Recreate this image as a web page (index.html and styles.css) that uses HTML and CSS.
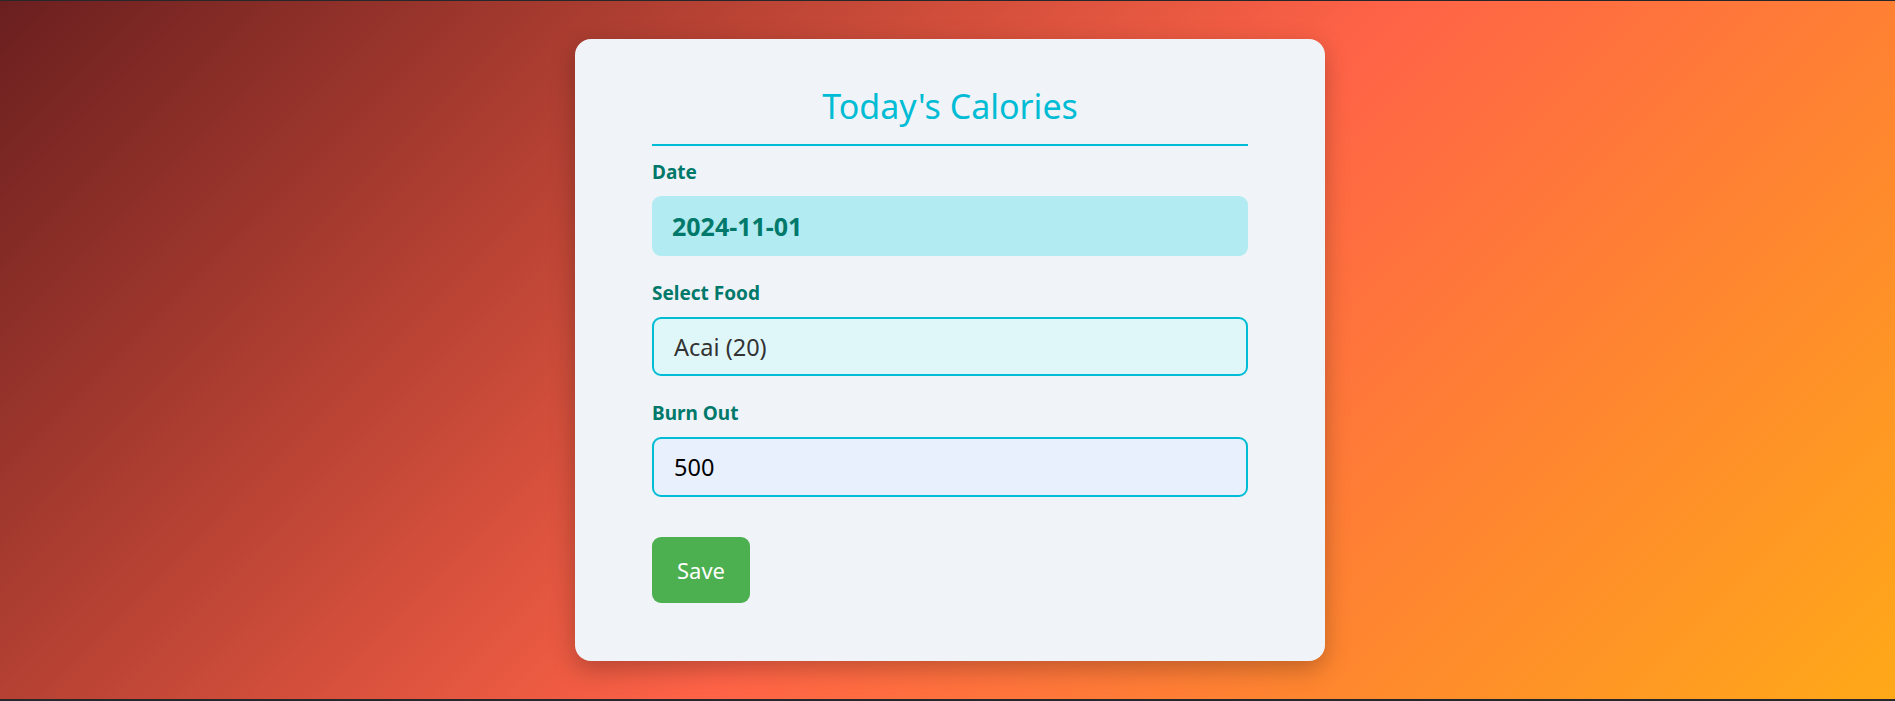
FILE: index.html
```html
<!DOCTYPE html>
<html lang="en">
<head>
<meta charset="utf-8">
<title>Today's Calories</title>
<link rel="stylesheet" href="styles.css">
</head>
<body>
<main class="page">
  <section class="card">
    <h2 class="card-title">Today's Calories</h2>
    <form class="form">
      <div class="field">
        <label class="field-label" for="date">Date</label>
        <div class="date-box" id="date">2024-11-01</div>
      </div>
      <div class="field">
        <label class="field-label" for="food">Select Food</label>
        <div class="select-box" id="food">Acai (20)</div>
      </div>
      <div class="field">
        <label class="field-label" for="burn">Burn Out</label>
        <input class="text-input" id="burn" type="text" value="500">
      </div>
      <button class="save-btn" type="button">Save</button>
    </form>
  </section>
</main>
</body>
</html>
```

FILE: styles.css
```css
* { box-sizing: border-box; }

html, body {
  margin: 0;
  padding: 0;
}

body {
  height: 701px;
  overflow: hidden;
  border-top: 1px solid #26272b;
  border-bottom: 2px solid #26272b;
  background: linear-gradient(135deg, #6a1f1f 0%, #ff6347 54%, #ffa918 100%);
  font-family: "Noto Sans", "Open Sans", sans-serif;
}

.page {
  height: 100%;
  display: flex;
  align-items: center;
  justify-content: center;
  padding-left: 5px;
}

.card {
  width: 750px;
  height: 622px;
  background: #f0f4f8;
  border-radius: 16px;
  padding: 41px 77px 58px;
  box-shadow: 0 8px 24px rgba(0, 0, 0, 0.25);
}

.card-title {
  margin: 0;
  text-align: center;
  font-weight: 400;
  font-size: 34px;
  line-height: 53px;
  color: #00bcd4;
  padding-bottom: 11px;
  border-bottom: 2px solid #00bcd4;
}

.form {
  display: flex;
  flex-direction: column;
  margin-top: 14px;
}

.field {
  display: flex;
  flex-direction: column;
  margin-bottom: 25px;
}

.field-label {
  font-size: 19px;
  line-height: 24px;
  font-weight: 700;
  color: #00796b;
  margin-bottom: 12px;
}

.date-box {
  height: 60px;
  display: flex;
  align-items: center;
  padding: 0 20px;
  background: #b2ebf2;
  border-radius: 9px;
  font-size: 25px;
  font-weight: 700;
  color: #00796b;
}

.select-box {
  height: 59px;
  display: flex;
  align-items: center;
  padding: 0 20px;
  background: #e0f7fa;
  border: 2px solid #00bcd4;
  border-radius: 9px;
  font-size: 23.5px;
  color: #333;
}

.text-input {
  height: 60px;
  padding: 0 20px;
  background: #e8f0fe;
  border: 2px solid #00bcd4;
  border-radius: 9px;
  font-family: inherit;
  font-size: 23.5px;
  color: #000;
  outline: none;
}

.save-btn {
  align-self: flex-start;
  margin-top: 15px;
  height: 66px;
  padding: 0 25px;
  background: #4caf50;
  color: #fff;
  border: none;
  border-radius: 9px;
  font-family: inherit;
  font-size: 22px;
}
```
